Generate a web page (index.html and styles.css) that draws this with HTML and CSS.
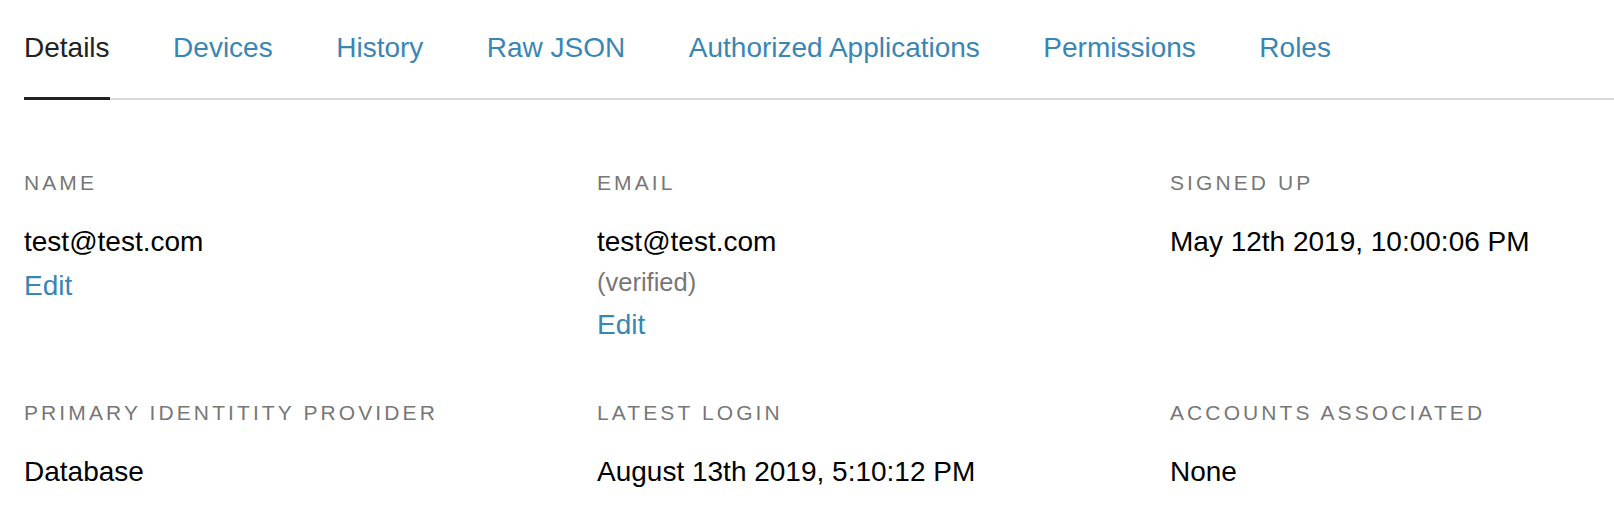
FILE: index.html
```html
<!DOCTYPE html>
<html>
<head>
<meta charset="utf-8">
<link rel="stylesheet" href="styles.css">
</head>
<body>
<nav class="tabs">
  <a class="tab active">Details</a>
  <a class="tab">Devices</a>
  <a class="tab">History</a>
  <a class="tab">Raw JSON</a>
  <a class="tab">Authorized Applications</a>
  <a class="tab">Permissions</a>
  <a class="tab">Roles</a>
</nav>
<section class="details">
  <div class="field">
    <div class="label">Name</div>
    <div class="value">test@test.com</div>
    <a class="link">Edit</a>
  </div>
  <div class="field">
    <div class="label">Email</div>
    <div class="value">test@test.com</div>
    <div class="note">(verified)</div>
    <a class="link">Edit</a>
  </div>
  <div class="field">
    <div class="label">Signed Up</div>
    <div class="value">May 12th 2019, 10:00:06 PM</div>
  </div>
  <div class="field">
    <div class="label">Primary Identitity Provider</div>
    <div class="value">Database</div>
  </div>
  <div class="field">
    <div class="label">Latest Login</div>
    <div class="value">August 13th 2019, 5:10:12 PM</div>
  </div>
  <div class="field">
    <div class="label">Accounts Associated</div>
    <div class="value">None</div>
  </div>
</section>
</body>
</html>
```

FILE: styles.css
```css
html, body {
  margin: 0;
  padding: 0;
  background: #fff;
}
body {
  font-family: "Liberation Sans", Arial, sans-serif;
  color: #000;
}
.tabs {
  display: flex;
  gap: 63.5px;
  margin-left: 24px;
  padding-top: 32px;
  border-bottom: 2px solid #d9d9d9;
}
.tab {
  font-size: 28px;
  line-height: 32px;
  color: #3a86b3;
  padding-bottom: 33px;
  border-bottom: 3px solid transparent;
  margin-bottom: -2px;
  cursor: pointer;
}
.tab.active {
  color: #222;
  border-bottom-color: #222;
}
.details {
  display: grid;
  grid-template-columns: 573px 573px 1fr;
  row-gap: 55px;
  padding: 71px 0 0 24px;
}
.field {
  display: flex;
  flex-direction: column;
  align-items: flex-start;
}
.label {
  font-size: 21px;
  line-height: 24px;
  letter-spacing: 3.1px;
  text-transform: uppercase;
  color: #777;
  margin-bottom: 26px;
}
.value {
  font-size: 28px;
  line-height: 42px;
  color: #000;
}
.note {
  font-size: 25.5px;
  line-height: 39px;
  color: #777;
}
.link {
  font-size: 28px;
  line-height: 42px;
  margin-top: 2px;
  color: #3a86b3;
  cursor: pointer;
}
```
